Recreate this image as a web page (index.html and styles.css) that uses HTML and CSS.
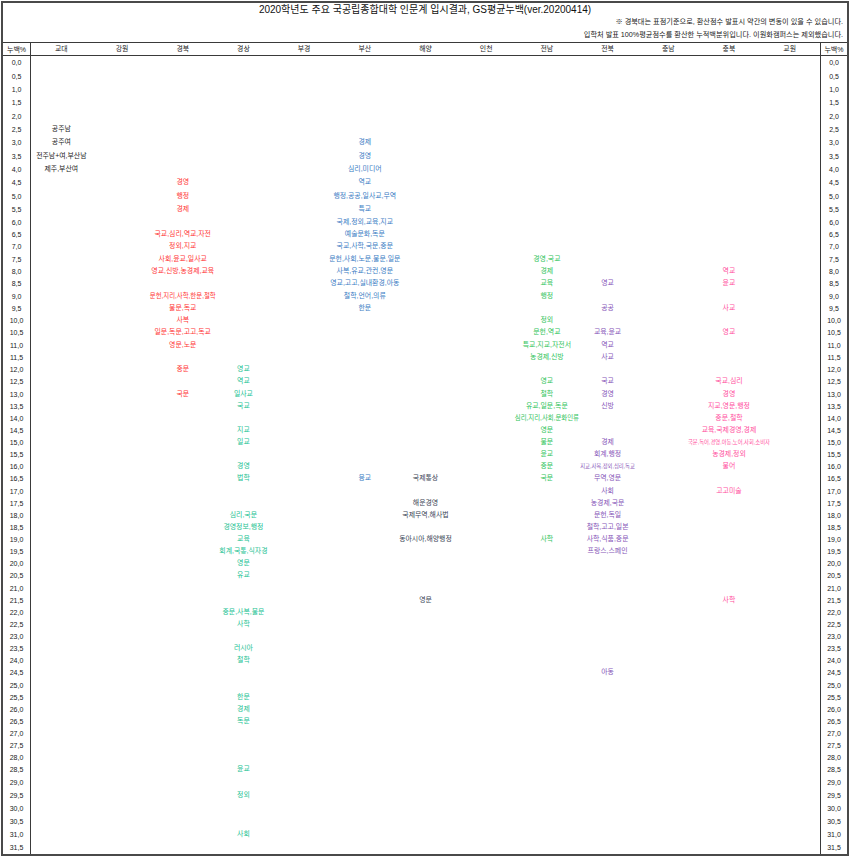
FILE: index.html
```html
<!DOCTYPE html>
<html lang="ko">
<head>
<meta charset="utf-8">
<title>2020학년도 주요 국공립종합대학 인문계 입시결과</title>
<link rel="stylesheet" href="styles.css">
</head>
<body>
<div class="sheet">
  <div class="head">
    <div class="title">2020학년도 주요 국공립종합대학 인문계 입시결과, GS평균누백(ver.20200414)</div>
    <div class="note">※ 경북대는 표점기준으로, 환산점수 발표시 약간의 변동이 있을 수 있습니다.</div>
    <div class="note">입학처 발표 100%평균점수를 환산한 누적백분위입니다. 이원화캠퍼스는 제외했습니다.</div>
  </div>
  <div class="row cols">
    <span class="c lab">누백%</span>
    <span class="c">교대</span><span class="c">강원</span><span class="c">경북</span><span class="c">경상</span><span class="c">부경</span><span class="c">부산</span><span class="c">해양</span><span class="c">인천</span><span class="c">전남</span><span class="c">전북</span><span class="c">충남</span><span class="c">충북</span><span class="c">교원</span>
    <span class="c lab r">누백%</span>
  </div>

  <div class="row ha"><span class="c lab">0,0</span><span class="c lab r">0,0</span></div>
  <div class="row ha"><span class="c lab">0,5</span><span class="c lab r">0,5</span></div>
  <div class="row ha"><span class="c lab">1,0</span><span class="c lab r">1,0</span></div>
  <div class="row ha"><span class="c lab">1,5</span><span class="c lab r">1,5</span></div>
  <div class="row ha"><span class="c lab">2,0</span><span class="c lab r">2,0</span></div>
  <div class="row ha"><span class="c lab">2,5</span><span class="c gy">공주남</span><span class="c lab r">2,5</span></div>
  <div class="row ha"><span class="c lab">3,0</span><span class="c gy">공주여</span><span class="c bs">경제</span><span class="c lab r">3,0</span></div>
  <div class="row ha"><span class="c lab">3,5</span><span class="c gy">전주남+여,부산남</span><span class="c bs">경영</span><span class="c lab r">3,5</span></div>
  <div class="row ha"><span class="c lab">4,0</span><span class="c gy">제주,부산여</span><span class="c bs">심리,미디어</span><span class="c lab r">4,0</span></div>
  <div class="row ha"><span class="c lab">4,5</span><span class="c gb">경영</span><span class="c bs">역교</span><span class="c lab r">4,5</span></div>
  <div class="row ha"><span class="c lab">5,0</span><span class="c gb">행정</span><span class="c bs">행정,공공,일사교,무역</span><span class="c lab r">5,0</span></div>
  <div class="row ha"><span class="c lab">5,5</span><span class="c gb">경제</span><span class="c bs">특교</span><span class="c lab r">5,5</span></div>

  <div class="row hb"><span class="c lab">6,0</span><span class="c bs">국제,정외,교육,지교</span><span class="c lab r">6,0</span></div>
  <div class="row hb"><span class="c lab">6,5</span><span class="c gb">국교,심리,역교,자전</span><span class="c bs">예술문화,독문</span><span class="c lab r">6,5</span></div>
  <div class="row hb"><span class="c lab">7,0</span><span class="c gb">정외,지교</span><span class="c bs">국교,사학,국문,중문</span><span class="c lab r">7,0</span></div>
  <div class="row hb"><span class="c lab">7,5</span><span class="c gb">사회,윤교,일사교</span><span class="c bs">문헌,사회,노문,불문,일문</span><span class="c jn">경영,국교</span><span class="c lab r">7,5</span></div>
  <div class="row hb"><span class="c lab">8,0</span><span class="c gb">영교,신방,농경제,교육</span><span class="c bs">사복,유교,관컨,영문</span><span class="c jn">경제</span><span class="c cb">역교</span><span class="c lab r">8,0</span></div>
  <div class="row hb"><span class="c lab">8,5</span><span class="c bs">영교,고고,실내환경,아동</span><span class="c jn">교육</span><span class="c jb">영교</span><span class="c cb">윤교</span><span class="c lab r">8,5</span></div>
  <div class="row hb"><span class="c lab">9,0</span><span class="c gb sm">문헌,지리,사학,한문,철학</span><span class="c bs">철학,언어,의류</span><span class="c jn">행정</span><span class="c lab r">9,0</span></div>
  <div class="row hb"><span class="c lab">9,5</span><span class="c gb">불문,독교</span><span class="c bs">한문</span><span class="c jb">공공</span><span class="c cb">사교</span><span class="c lab r">9,5</span></div>
  <div class="row hb"><span class="c lab">10,0</span><span class="c gb">사복</span><span class="c jn">정외</span><span class="c lab r">10,0</span></div>
  <div class="row hb"><span class="c lab">10,5</span><span class="c gb">일문,독문,고고,독교</span><span class="c jn">문헌,역교</span><span class="c jb">교육,윤교</span><span class="c cb">영교</span><span class="c lab r">10,5</span></div>
  <div class="row hb"><span class="c lab">11,0</span><span class="c gb">영문,노문</span><span class="c jn">특교,지교,자전서</span><span class="c jb">역교</span><span class="c lab r">11,0</span></div>
  <div class="row hb"><span class="c lab">11,5</span><span class="c jn">농경제,신방</span><span class="c jb">사교</span><span class="c lab r">11,5</span></div>

  <div class="row hc"><span class="c lab">12,0</span><span class="c gb">중문</span><span class="c gs">영교</span><span class="c lab r">12,0</span></div>
  <div class="row hc"><span class="c lab">12,5</span><span class="c gs">역교</span><span class="c jn">영교</span><span class="c jb">국교</span><span class="c cb">국교,심리</span><span class="c lab r">12,5</span></div>
  <div class="row hc"><span class="c lab">13,0</span><span class="c gb">국문</span><span class="c gs">일사교</span><span class="c jn">철학</span><span class="c jb">경영</span><span class="c cb">경영</span><span class="c lab r">13,0</span></div>
  <div class="row hc"><span class="c lab">13,5</span><span class="c gs">국교</span><span class="c jn">유교,일문,독문</span><span class="c jb">신방</span><span class="c cb">지교,영문,행정</span><span class="c lab r">13,5</span></div>
  <div class="row hc"><span class="c lab">14,0</span><span class="c jn sm">심리,지리,사회,문화인류</span><span class="c cb">중문,철학</span><span class="c lab r">14,0</span></div>
  <div class="row hc"><span class="c lab">14,5</span><span class="c gs">지교</span><span class="c jn">영문</span><span class="c cb">교육,국제경영,경제</span><span class="c lab r">14,5</span></div>
  <div class="row hc"><span class="c lab">15,0</span><span class="c gs">일교</span><span class="c jn">불문</span><span class="c jb">경제</span><span class="c cb xs">국문,독어,경영,아동,노어,사회,소비자</span><span class="c lab r">15,0</span></div>
  <div class="row hc"><span class="c lab">15,5</span><span class="c jn">윤교</span><span class="c jb">회계,행정</span><span class="c cb">농경제,정외</span><span class="c lab r">15,5</span></div>
  <div class="row hc"><span class="c lab">16,0</span><span class="c gs">경영</span><span class="c jn">중문</span><span class="c jb xs">지교,사복,정외,심리,독교</span><span class="c cb">불어</span><span class="c lab r">16,0</span></div>
  <div class="row hc"><span class="c lab">16,5</span><span class="c gs">법학</span><span class="c bs">융교</span><span class="c hy">국제통상</span><span class="c jn">국문</span><span class="c jb">무역,영문</span><span class="c lab r">16,5</span></div>
  <div class="row hc"><span class="c lab">17,0</span><span class="c jb">사회</span><span class="c cb">고고미술</span><span class="c lab r">17,0</span></div>
  <div class="row hc"><span class="c lab">17,5</span><span class="c hy">해운경영</span><span class="c jb">농경제,국문</span><span class="c lab r">17,5</span></div>
  <div class="row hc"><span class="c lab">18,0</span><span class="c gs">심리,국문</span><span class="c hy">국제무역,해사법</span><span class="c jb">문헌,독일</span><span class="c lab r">18,0</span></div>
  <div class="row hc"><span class="c lab">18,5</span><span class="c gs">경영정보,행정</span><span class="c jb">철학,고고,일본</span><span class="c lab r">18,5</span></div>
  <div class="row hc"><span class="c lab">19,0</span><span class="c gs">교육</span><span class="c hy">동아시아,해양행정</span><span class="c jn">사학</span><span class="c jb">사학,식품,중문</span><span class="c lab r">19,0</span></div>
  <div class="row hc"><span class="c lab">19,5</span><span class="c gs">회계,국통,식자경</span><span class="c jb">프랑스,스페인</span><span class="c lab r">19,5</span></div>
  <div class="row hc"><span class="c lab">20,0</span><span class="c gs">영문</span><span class="c lab r">20,0</span></div>
  <div class="row hc"><span class="c lab">20,5</span><span class="c gs">유교</span><span class="c lab r">20,5</span></div>
  <div class="row hc"><span class="c lab">21,0</span><span class="c lab r">21,0</span></div>
  <div class="row hc"><span class="c lab">21,5</span><span class="c hy">영문</span><span class="c cb">사학</span><span class="c lab r">21,5</span></div>
  <div class="row hc"><span class="c lab">22,0</span><span class="c gs">중문,사복,불문</span><span class="c lab r">22,0</span></div>
  <div class="row hc"><span class="c lab">22,5</span><span class="c gs">사학</span><span class="c lab r">22,5</span></div>
  <div class="row hc"><span class="c lab">23,0</span><span class="c lab r">23,0</span></div>
  <div class="row hc"><span class="c lab">23,5</span><span class="c gs">러시아</span><span class="c lab r">23,5</span></div>
  <div class="row hc"><span class="c lab">24,0</span><span class="c gs">철학</span><span class="c lab r">24,0</span></div>
  <div class="row hc"><span class="c lab">24,5</span><span class="c jb">아동</span><span class="c lab r">24,5</span></div>
  <div class="row hc"><span class="c lab">25,0</span><span class="c lab r">25,0</span></div>
  <div class="row hc"><span class="c lab">25,5</span><span class="c gs">한문</span><span class="c lab r">25,5</span></div>
  <div class="row hc"><span class="c lab">26,0</span><span class="c gs">경제</span><span class="c lab r">26,0</span></div>
  <div class="row hc"><span class="c lab">26,5</span><span class="c gs">독문</span><span class="c lab r">26,5</span></div>
  <div class="row hc"><span class="c lab">27,0</span><span class="c lab r">27,0</span></div>
  <div class="row hc"><span class="c lab">27,5</span><span class="c lab r">27,5</span></div>
  <div class="row hc"><span class="c lab">28,0</span><span class="c lab r">28,0</span></div>
  <div class="row hc"><span class="c lab">28,5</span><span class="c gs">윤교</span><span class="c lab r">28,5</span></div>

  <div class="row hd"><span class="c lab">29,0</span><span class="c lab r">29,0</span></div>
  <div class="row hd"><span class="c lab">29,5</span><span class="c gs">정외</span><span class="c lab r">29,5</span></div>
  <div class="row hd"><span class="c lab">30,0</span><span class="c lab r">30,0</span></div>
  <div class="row hd"><span class="c lab">30,5</span><span class="c lab r">30,5</span></div>
  <div class="row hd"><span class="c lab">31,0</span><span class="c gs">사회</span><span class="c lab r">31,0</span></div>
  <div class="row hd"><span class="c lab">31,5</span><span class="c lab r">31,5</span></div>
</div>
</body>
</html>
```

FILE: styles.css
```css
* {
  box-sizing: border-box;
}

body {
  margin: 0;
  background: #ffffff;
  font-family: "Liberation Sans", "Noto Sans CJK KR", sans-serif;
  color: #222222;
}

.sheet {
  width: 848px;
  margin: 1px 1px 0 1px;
  border: 2px solid #4a4a4a;
}

.head {
  height: 39px;
}

.title {
  height: 13px;
  line-height: 13px;
  font-size: 10px;
  text-align: center;
  color: #111111;
}

.note {
  height: 12.5px;
  line-height: 12.5px;
  padding-right: 4px;
  font-size: 7.2px;
  text-align: right;
  color: #222222;
}

.row {
  display: grid;
  grid-template-columns: 28px repeat(13, minmax(0, 1fr)) 27px;
}

.cols {
  height: 14px;
  border-top: 1px solid #3a3a3a;
  border-bottom: 1px solid #3a3a3a;
}

.ha { height: 13.35px; }
.hb { height: 12.3px; }
.hc { height: 12.13px; }
.hd { height: 13px; }

.c {
  display: flex;
  justify-content: center;
  align-items: center;
  min-width: 0;
  white-space: nowrap;
  font-size: 6.9px;
  line-height: 1;
}

.lab {
  grid-column: 1;
  font-size: 7px;
  color: #222222;
  border-right: 1px solid #3a3a3a;
}

.lab.r {
  grid-column: 15;
  border-right: 0;
  border-left: 1px solid #3a3a3a;
}

.gy { grid-column: 2; color: #222222; }
.gb { grid-column: 4; color: #ff3535; }
.gs { grid-column: 5; color: #22c292; }
.bs { grid-column: 7; color: #3a7cc4; }
.hy { grid-column: 8; color: #3a4656; }
.jn { grid-column: 10; color: #2fc45a; }
.jb { grid-column: 11; color: #8655b8; }
.cb { grid-column: 13; color: #ff4f9e; }

.sm { font-size: 6.4px; }
.xs { font-size: 5.3px; }
```
